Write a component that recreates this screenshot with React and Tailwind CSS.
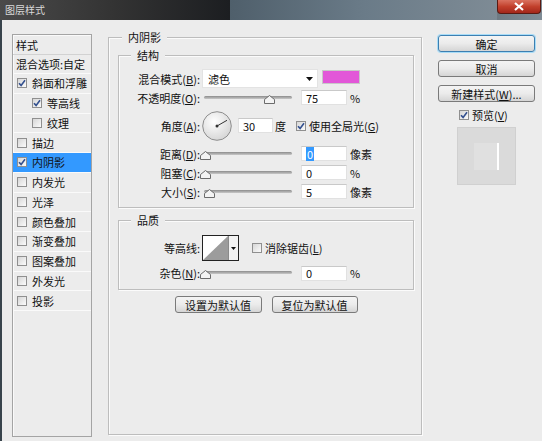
import React from "react";

const Check = ({ checked }) => (
  <span className="inline-flex h-[10px] w-[10px] shrink-0 items-center justify-center border border-[#8f8f8f] bg-linear-to-br from-[#d6d6d6] to-[#fbfbfb]">
    {checked && (
      <svg width="8" height="8" viewBox="0 0 8 8">
        <path d="M1 4.2 L3.1 6.4 L7 1.3" fill="none" stroke="#33508f" strokeWidth="1.6" />
      </svg>
    )}
  </span>
);

// pos = thumb offset in px from track start
const Slider = ({ pos }) => (
  <div className="relative mt-[4px] h-[10px] w-[92px] shrink-0">
    <div className="absolute left-[4px] right-0 top-[1px] h-[3px] rounded-full bg-linear-to-b from-[#8c8c8c] to-[#c9c9c9]" />
    <svg className="absolute top-0" style={{ left: pos }} width="11" height="9" viewBox="0 0 11 9">
      <path d="M0.5 8.5 L0.5 4.5 L5.5 0.5 L10.5 4.5 L10.5 8.5 Z" fill="#f3f3f3" stroke="#6b6b6b" />
    </svg>
  </div>
);

const Field = ({ children, w = "w-[46px]", ml = "ml-[9px]" }) => (
  <div className={`${ml} ${w} flex h-[15px] shrink-0 items-center border border-[#e1e1e1] border-t-[#c9c9c9] bg-white pl-[4px]`}>
    {children}
  </div>
);

const Label = ({ children }) => <div className="w-[81px] shrink-0 text-right">{children}</div>;

const Btn = ({ children, className = "", primary }) => (
  <div
    className={`flex h-[17px] items-center justify-center rounded-[3px] border bg-linear-to-b from-[#f4f4f4] via-[#ebebeb] to-[#d5d5d5] ${
      primary ? "border-[#3c7fb1] shadow-[0_0_0_1px_#a8dcf7]" : "border-[#7a7a7a]"
    } ${className}`}
  >
    {children}
  </div>
);

const Group = ({ title, className = "", left = "left-[12px]", children }) => (
  <div className={`relative border border-[#bdbdbd] shadow-[inset_1px_1px_0_#fbfbfb,1px_1px_0_#fbfbfb] ${className}`}>
    <span className={`absolute -top-[8px] ${left} bg-[#ececec] px-[6px] leading-[14px]`}>{title}</span>
    {children}
  </div>
);

const items = [
  { label: "斜面和浮雕", checked: true },
  { label: "等高线", checked: true, sub: true },
  { label: "纹理", sub: true },
  { label: "描边" },
  { label: "内阴影", checked: true, active: true },
  { label: "内发光" },
  { label: "光泽" },
  { label: "颜色叠加" },
  { label: "渐变叠加" },
  { label: "图案叠加" },
  { label: "外发光" },
  { label: "投影" },
];

export default function App() {
  return (
    <div className="flex h-[441px] w-[542px] flex-col overflow-hidden bg-[#ececec] font-['Noto_Sans_CJK_SC',sans-serif] text-[11px] leading-[14px] text-[#111]">
      {/* title bar */}
      <div className="flex h-[20px] shrink-0 items-start bg-linear-to-r from-[#484848] via-[#24272a] to-[#7f8c96]">
        <div className="flex h-full w-[230px] items-center bg-linear-to-r from-[#4a4a4a] via-[#333] to-[#1c1e21] pl-[5px] text-[10px] text-[#d9d9d9]">
          图层样式
        </div>
        <div className="h-full flex-1 bg-linear-to-r from-[#4f5f6b] via-[#6a7b88] to-[#7e8b95]" />
        <div className="mr-[1px] flex h-[14px] w-[44px] items-center justify-center rounded-b-[4px] border border-t-0 border-[#5a1a12] bg-linear-to-b from-[#d9715f] via-[#c2402c] to-[#a3261a]">
          <svg width="12" height="9" viewBox="0 0 12 9">
            <path d="M2 1 L10 8 M10 1 L2 8" stroke="#fff" strokeWidth="2.2" />
          </svg>
        </div>
      </div>

      <div className="flex flex-1 items-start border-l-2 border-[#39444c] pl-[10px]">
        {/* left list */}
        <div className="mt-[14px] h-[403px] w-[80px] shrink-0 border border-[#a4a4a4] shadow-[inset_1px_1px_0_#fafafa]">
          <div className="flex h-[20px] items-center border-b border-[#d2d2d2] pl-[3px]">样式</div>
          <div className="flex h-[19px] items-center border-b border-[#fafafa] pl-[3px]">混合选项:自定</div>
          {items.map((it) => (
            <div
              key={it.label}
              className={`flex h-[19.75px] items-center gap-[5px] border-b border-[#fafafa] ${it.sub ? "pl-[19px]" : "pl-[4px]"} ${
                it.active ? "bg-[#3399ff]" : ""
              }`}
            >
              <Check checked={it.checked} />
              <span>{it.label}</span>
            </div>
          ))}
        </div>

        {/* middle */}
        <Group title="内阴影" left="left-[13px]" className="ml-[16px] mt-[17px] h-[398px] w-[314px] shrink-0 pl-[9px] pt-[17px]">
          <Group title="结构" className="h-[153px] w-[296px] pt-[13px]">
            <div className="flex h-[19px] items-center">
              <Label>
                混合模式(<u>B</u>):
              </Label>
              <div className="ml-[2px] flex h-[19px] w-[116px] items-center justify-between border border-[#e3e3e3] bg-white pl-[5px] pr-[4px]">
                <span>滤色</span>
                <svg width="7" height="4" viewBox="0 0 7 4">
                  <path d="M0 0 L7 0 L3.5 4 Z" fill="#111" />
                </svg>
              </div>
              <div className="ml-[4px] h-[14px] w-[38px] self-start mt-[1px] border border-[#c8c8c8] bg-[#e257d8]" />
            </div>
            <div className="flex h-[19px] items-center">
              <Label>
                不透明度(<u>O</u>):
              </Label>
              <Slider pos={64} />
              <Field>75</Field>
              <span className="ml-[3px]">%</span>
            </div>
            <div className="flex h-[37px] items-center">
              <Label>
                角度(<u>A</u>):
              </Label>
              <svg className="ml-[2px] shrink-0" width="30" height="30" viewBox="0 0 30 30">
                <defs>
                  <radialGradient id="dial" cx="40%" cy="35%" r="70%">
                    <stop offset="0%" stopColor="#ffffff" />
                    <stop offset="100%" stopColor="#d4d4d4" />
                  </radialGradient>
                </defs>
                <circle cx="15" cy="15" r="14.3" fill="url(#dial)" stroke="#8d8d8d" />
                <path d="M15 15 L25 9.3" stroke="#333" strokeWidth="1" />
                <circle cx="15" cy="15" r="1.5" fill="#333" />
              </svg>
              <Field w="w-[35px]" ml="ml-[6px]">
                30
              </Field>
              <span className="ml-[2px]">度</span>
              <span className="ml-[10px] flex items-center gap-[3px]">
                <Check checked />
                <span>
                  使用全局光(<u>G</u>)
                </span>
              </span>
            </div>
            <div className="flex h-[19px] items-center">
              <Label>
                距离(<u>D</u>):
              </Label>
              <Slider pos={0} />
              <Field>
                <span className="bg-[#3399ff] px-[1px] text-white">0</span>
              </Field>
              <span className="ml-[3px]">像素</span>
            </div>
            <div className="flex h-[19px] items-center">
              <Label>
                阻塞(<u>C</u>):
              </Label>
              <Slider pos={0} />
              <Field>0</Field>
              <span className="ml-[3px]">%</span>
            </div>
            <div className="flex h-[19px] items-center">
              <Label>
                大小(<u>S</u>):
              </Label>
              <Slider pos={4} />
              <Field>5</Field>
              <span className="ml-[3px]">像素</span>
            </div>
          </Group>

          <Group title="品质" className="mt-[12px] h-[70px] w-[296px] pt-[14px]">
            <div className="flex h-[26px] items-center">
              <Label>等高线:</Label>
              <div className="ml-[2px] flex h-[26px] w-[37px] shrink-0 border border-[#222] bg-white">
                <svg width="25" height="24" viewBox="0 0 25 24">
                  <path d="M0 24 L25 0 L25 24 Z" fill="#9c9c9c" />
                </svg>
                <div className="flex flex-1 items-center justify-center border-l border-[#8a8a8a] bg-[#f2f2f2]">
                  <svg width="5" height="3" viewBox="0 0 5 3">
                    <path d="M0 0 L5 0 L2.5 3 Z" fill="#111" />
                  </svg>
                </div>
              </div>
              <span className="ml-[13px] flex items-center gap-[3px]">
                <Check />
                <span>
                  消除锯齿(<u>L</u>)
                </span>
              </span>
            </div>
            <div className="mt-[3px] flex h-[18px] items-center">
              <Label>
                杂色(<u>N</u>):
              </Label>
              <Slider pos={0} />
              <Field>0</Field>
              <span className="ml-[3px]">%</span>
            </div>
          </Group>

          <div className="mt-[6px] flex w-[296px] justify-center gap-[10px]">
            <Btn className="w-[87px]">设置为默认值</Btn>
            <Btn className="w-[86px]">复位为默认值</Btn>
          </div>
        </Group>

        {/* right column */}
        <div className="ml-[16px] mt-[15px] flex w-[97px] shrink-0 flex-col">
          <Btn primary>确定</Btn>
          <Btn className="mt-[8px]">取消</Btn>
          <Btn className="mt-[8px]">
            <span>
              新建样式(<u>W</u>)...
            </span>
          </Btn>
          <div className="mt-[6px] flex h-[14px] items-center gap-[3px] pl-[21px]">
            <Check checked />
            <span>
              预览(<u>V</u>)
            </span>
          </div>
          <div className="ml-[19px] mt-[5px] flex h-[58px] w-[59px] items-center justify-center border border-[#d0d0d0] bg-[#dadada]">
            <div className="h-[27px] w-[25px] border-r-2 border-white bg-[#e0e0e0]" />
          </div>
        </div>
      </div>
    </div>
  );
}
